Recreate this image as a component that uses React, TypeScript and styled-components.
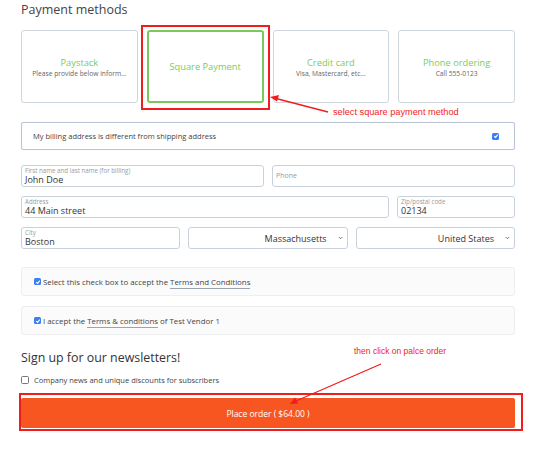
import React from "react"
import styled, { createGlobalStyle } from "styled-components"

const GlobalStyle = createGlobalStyle`
  html, body {
    margin: 0;
    padding: 0;
    background: #fff;
  }
  body {
    font-family: "Open Sans", "Noto Sans", sans-serif;
    color: #444;
  }
`

type Method = {
  title: string
  note?: string
  selected?: boolean
}

const methods: Method[] = [
  { title: "Paystack", note: "Please provide below inform..." },
  { title: "Square Payment", selected: true },
  { title: "Credit card", note: "Visa, Mastercard, etc..." },
  { title: "Phone ordering", note: "Call 555-0123" },
]

const Page = styled.div`
  position: relative;
  width: 550px;
  height: 450px;
  overflow: hidden;
  padding: 0 35px 0 21px;
  box-sizing: border-box;
`

const Title = styled.h2`
  margin: 0;
  font-size: 12.5px;
  line-height: 20px;
  font-weight: 400;
  color: #444;
`

const Methods = styled.div`
  display: grid;
  grid-template-columns: repeat(4, 1fr);
  gap: 9px;
  margin-top: 10px;
`

const Card = styled.div<{ $selected?: boolean }>`
  height: 73px;
  box-sizing: border-box;
  border: ${(p) => (p.$selected ? "2px solid #7cc85a" : "1px solid #cfd6de")};
  border-radius: 3px;
  display: flex;
  flex-direction: column;
  align-items: center;
  justify-content: center;
  text-align: center;
  padding: 0 4px;
`

const CardTitle = styled.div`
  color: #79cc5b;
  font-size: 9.3px;
  line-height: 13px;
`

const CardNote = styled.div`
  color: #666;
  font-size: 6.7px;
  line-height: 9px;
  white-space: nowrap;
`

const BillingRow = styled.div`
  margin-top: 19px;
  height: 28px;
  box-sizing: border-box;
  border: 1px solid #b9c5d4;
  border-radius: 2px;
  box-shadow: 0 0 1px rgba(0, 0, 0, 0.15);
  display: flex;
  align-items: center;
  justify-content: space-between;
  padding: 0 15px 0 11px;
  font-size: 7.5px;
  color: #444;
`

const Box = styled.span<{ $checked?: boolean; $size?: number }>`
  display: inline-flex;
  align-items: center;
  justify-content: center;
  width: ${(p) => p.$size ?? 7}px;
  height: ${(p) => p.$size ?? 7}px;
  box-sizing: border-box;
  border-radius: 1.5px;
  flex: none;
  background: ${(p) => (p.$checked ? "#3d7ff0" : "#fff")};
  border: ${(p) => (p.$checked ? "none" : "1px solid #777")};
`

const Check = ({ checked, size }: { checked?: boolean; size?: number }) => (
  <Box $checked={checked} $size={size}>
    {checked && (
      <svg width="6" height="6" viewBox="0 0 10 10">
        <path d="M2 5.3 L4.2 7.4 L8 2.6" fill="none" stroke="#fff" strokeWidth="1.8" />
      </svg>
    )}
  </Box>
)

const Fields = styled.div`
  margin-top: 15px;
  display: flex;
  flex-direction: column;
  gap: 9px;
`

const FieldRow = styled.div<{ $cols: string }>`
  display: grid;
  grid-template-columns: ${(p) => p.$cols};
  gap: 8px;
`

const Field = styled.div`
  height: 22px;
  box-sizing: border-box;
  border: 1px solid #c9d1db;
  border-radius: 3px;
  padding: 0 3px;
  display: flex;
  flex-direction: column;
  justify-content: center;
`

const FieldLabel = styled.div<{ $alone?: boolean }>`
  font-size: ${(p) => (p.$alone ? "7px" : "6.2px")};
  line-height: ${(p) => (p.$alone ? "10px" : "7.5px")};
  color: #9a9a9a;
  white-space: nowrap;
`

const FieldValue = styled.div`
  font-size: 9px;
  line-height: 11px;
  color: #333;
`

const Select = styled.div`
  height: 22px;
  box-sizing: border-box;
  border: 1px solid #c9d1db;
  border-radius: 3px;
  display: flex;
  align-items: center;
  justify-content: flex-end;
  gap: 11px;
  padding-right: 4px;
  font-size: 9px;
  color: #333;
`

const Chevron = () => (
  <svg width="5" height="4" viewBox="0 0 10 6">
    <path d="M1.5 1 L5 4.5 L8.5 1" fill="none" stroke="#555" strokeWidth="1.6" />
  </svg>
)

const TermsBox = styled.div<{ $top: number }>`
  margin-top: ${(p) => p.$top}px;
  height: 29px;
  box-sizing: border-box;
  border: 1px solid #eceef1;
  border-radius: 3px;
  background: #fbfbfc;
  display: flex;
  align-items: center;
  gap: 2px;
  padding-left: 12px;
  font-size: 7.85px;
  color: #444;
`

const TermsLink = styled.span`
  border-bottom: 1px solid #9aa4b0;
  padding-bottom: 1px;
`

const SubTitle = styled.h3`
  margin: 13px 0 0;
  font-size: 12.4px;
  line-height: 20px;
  font-weight: 400;
  color: #333;
`

const NewsRow = styled.div`
  margin-top: 7px;
  display: flex;
  align-items: center;
  gap: 5px;
  font-size: 7.5px;
  color: #444;
`

const PlaceOrder = styled.div`
  margin-top: 13px;
  height: 30px;
  background: #f75620;
  border-radius: 2px;
  color: #fff;
  font-size: 8.5px;
  display: flex;
  align-items: center;
  justify-content: center;
`

const Highlight = styled.div<{ $l: number; $t: number; $w: number; $h: number }>`
  position: absolute;
  left: ${(p) => p.$l}px;
  top: ${(p) => p.$t}px;
  width: ${(p) => p.$w}px;
  height: ${(p) => p.$h}px;
  box-sizing: border-box;
  border: 2px solid #f11d1d;
  pointer-events: none;
`

const Note = styled.div<{ $l: number; $t: number; $size: number }>`
  position: absolute;
  left: ${(p) => p.$l}px;
  top: ${(p) => p.$t}px;
  font-family: "Liberation Sans", Arial, sans-serif;
  font-size: ${(p) => p.$size}px;
  color: #f11d1d;
  white-space: nowrap;
`

const Arrows = styled.svg`
  position: absolute;
  left: 0;
  top: 0;
  pointer-events: none;
`

export default function App() {
  return (
    <>
      <GlobalStyle />
      <Page>
        <Title>Payment methods</Title>
        <Methods>
          {methods.map((m) => (
            <Card key={m.title} $selected={m.selected}>
              <CardTitle>{m.title}</CardTitle>
              {m.note && <CardNote>{m.note}</CardNote>}
            </Card>
          ))}
        </Methods>

        <BillingRow>
          <span>My billing address is different from shipping address</span>
          <Check checked />
        </BillingRow>

        <Fields>
          <FieldRow $cols="1fr 1fr">
            <Field>
              <FieldLabel>First name and last name (for billing)</FieldLabel>
              <FieldValue>John Doe</FieldValue>
            </Field>
            <Field>
              <FieldLabel $alone>Phone</FieldLabel>
            </Field>
          </FieldRow>
          <FieldRow $cols="1fr 118px">
            <Field>
              <FieldLabel>Address</FieldLabel>
              <FieldValue>44 Main street</FieldValue>
            </Field>
            <Field>
              <FieldLabel>Zip/postal code</FieldLabel>
              <FieldValue>02134</FieldValue>
            </Field>
          </FieldRow>
          <FieldRow $cols="1fr 1fr 1fr">
            <Field>
              <FieldLabel>City</FieldLabel>
              <FieldValue>Boston</FieldValue>
            </Field>
            <Select>
              Massachusetts <Chevron />
            </Select>
            <Select>
              United States <Chevron />
            </Select>
          </FieldRow>
        </Fields>

        <TermsBox $top={18}>
          <Check checked />
          <span>
            Select this check box to accept the <TermsLink>Terms and Conditions</TermsLink>
          </span>
        </TermsBox>
        <TermsBox $top={10}>
          <Check checked />
          <span>
            I accept the <TermsLink>Terms &amp; conditions</TermsLink> of Test Vendor 1
          </span>
        </TermsBox>

        <SubTitle>Sign up for our newsletters!</SubTitle>
        <NewsRow>
          <Check size={8} />
          <span>Company news and unique discounts for subscribers</span>
        </NewsRow>
        <PlaceOrder>Place order ( $64.00 )</PlaceOrder>

        <Highlight $l={141} $t={25} $w={129} $h={85} />
        <Highlight $l={19} $t={393} $w={504} $h={38} />
        <Note $l={333} $t={107} $size={9.2}>select square payment method</Note>
        <Note $l={354} $t={346} $size={8.5}>then click on palce order</Note>
        <Arrows width="550" height="450" viewBox="0 0 550 450">
          <line x1="328" y1="112" x2="276" y2="98.5" stroke="#f11d1d" strokeWidth="1.3" />
          <polygon points="270,97 279,95 277,101.5" fill="#f11d1d" />
          <line x1="381" y1="364" x2="296" y2="401" stroke="#f11d1d" strokeWidth="1.3" />
          <polygon points="290,404 295,397.5 298,403.5" fill="#f11d1d" />
        </Arrows>
      </Page>
    </>
  )
}
